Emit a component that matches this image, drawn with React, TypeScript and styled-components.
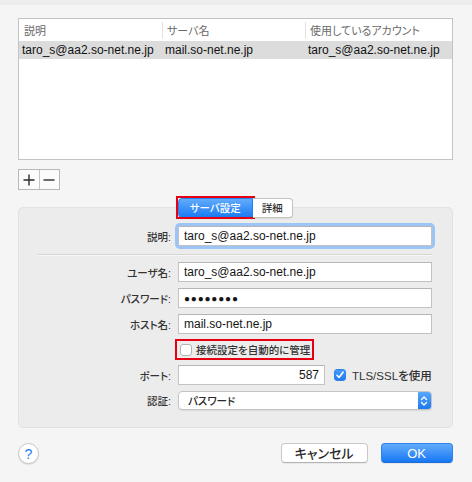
import styled, { createGlobalStyle } from "styled-components";

const GlobalStyle = createGlobalStyle`
  html, body {
    margin: 0;
    padding: 0;
  }
  body {
    background: #f5f5f5;
    font-family: "Liberation Sans", "Noto Sans CJK JP", sans-serif;
    color: #1e1e1e;
    font-feature-settings: "palt";
  }
  button, input {
    font-feature-settings: "palt";
  }
`;

const accounts = [
  {
    name: "taro_s@aa2.so-net.ne.jp",
    server: "mail.so-net.ne.jp",
    account: "taro_s@aa2.so-net.ne.jp",
  },
];

export default function App() {
  return (
    <>
      <GlobalStyle />
      <Window>
        <SideEdge>
          <SideMark $gap={25} $h={15} />
          <SideMark $gap={20} $h={25} />
        </SideEdge>
        <Main>
          <Table>
            <HeaderRow>
              <HeaderCell>説明</HeaderCell>
              <HeaderCell $divider>サーバ名</HeaderCell>
              <HeaderCell $divider>使用しているアカウント</HeaderCell>
            </HeaderRow>
            {accounts.map((a) => (
              <DataRow key={a.name}>
                <DataCell>{a.name}</DataCell>
                <DataCell>{a.server}</DataCell>
                <DataCell>{a.account}</DataCell>
              </DataRow>
            ))}
          </Table>

          <AddRemove>
            <SquareButton type="button" aria-label="追加">
              <svg width="12" height="12" viewBox="0 0 12 12">
                <path d="M6 0.5v11M0.5 6h11" stroke="#2b2b2b" strokeWidth="1.4" />
              </svg>
            </SquareButton>
            <SquareButton type="button" aria-label="削除">
              <svg width="12" height="12" viewBox="0 0 12 12">
                <path d="M0.5 6h11" stroke="#2b2b2b" strokeWidth="1.4" />
              </svg>
            </SquareButton>
          </AddRemove>

          <TabBox>
            <Tabs>
              <Tab type="button" $width={75} $active $marked>
                サーバ設定
              </Tab>
              <Tab type="button" $width={40}>
                詳細
              </Tab>
            </Tabs>
            <Panel>
              <Form>
                <Label>説明:</Label>
                <Input readOnly value="taro_s@aa2.so-net.ne.jp" $focused />
                <Separator />
                <Label>ユーザ名:</Label>
                <Input readOnly value="taro_s@aa2.so-net.ne.jp" />
                <Label>パスワード:</Label>
                <Input readOnly value="●●●●●●●●" $dots />
                <Label>ホスト名:</Label>
                <Input readOnly value="mail.so-net.ne.jp" />
                <CheckRow>
                  <CheckBox />
                  <CheckText>接続設定を自動的に管理</CheckText>
                </CheckRow>
                <Label>ポート:</Label>
                <PortLine>
                  <PortInput readOnly value="587" />
                  <CheckBox $checked>
                    <svg width="10" height="10" viewBox="0 0 10 10">
                      <path
                        d="M2 5.3l2 2.2L8 2.2"
                        fill="none"
                        stroke="#fff"
                        strokeWidth="1.6"
                        strokeLinecap="round"
                        strokeLinejoin="round"
                      />
                    </svg>
                  </CheckBox>
                  <CheckText $latin>TLS/SSLを使用</CheckText>
                </PortLine>
                <Label>認証:</Label>
                <Popup>
                  <PopupText>パスワード</PopupText>
                  <Stepper>
                    <svg width="8" height="12" viewBox="0 0 8 12">
                      <path
                        d="M1.5 4.5L4 2l2.5 2.5M1.5 7.5L4 10l2.5-2.5"
                        fill="none"
                        stroke="#fff"
                        strokeWidth="1.3"
                        strokeLinecap="round"
                        strokeLinejoin="round"
                      />
                    </svg>
                  </Stepper>
                </Popup>
              </Form>
            </Panel>
          </TabBox>

          <Footer>
            <HelpButton type="button">?</HelpButton>
            <Actions>
              <PushButton type="button" $width={87}>
                キャンセル
              </PushButton>
              <PushButton type="button" $width={72} $primary>
                OK
              </PushButton>
            </Actions>
          </Footer>
        </Main>
      </Window>
    </>
  );
}

const Window = styled.div`
  width: 472px;
  height: 482px;
  box-sizing: border-box;
  display: flex;
  border-top: 5px solid #ededed;
  background: #f5f5f5;
  overflow: hidden;
`;

const SideEdge = styled.div`
  width: 2px;
  display: flex;
  flex-direction: column;
`;

const SideMark = styled.span<{ $gap: number; $h: number }>`
  display: block;
  margin-top: ${(p) => p.$gap}px;
  height: ${(p) => p.$h}px;
  background: #b9d7f5;
`;

const Main = styled.div`
  flex: 1;
  display: flex;
  flex-direction: column;
  padding: 13px 20px 0 18px;
`;

const Table = styled.div`
  height: 142px;
  box-sizing: border-box;
  border: 1px solid #c4c4c4;
  background: #fff;
  display: flex;
  flex-direction: column;
`;

const HeaderRow = styled.div`
  display: grid;
  grid-template-columns: 143px 143px 1fr;
  align-items: center;
  height: 22px;
`;

const HeaderCell = styled.div<{ $divider?: boolean }>`
  height: 17px;
  display: flex;
  align-items: center;
  padding-left: ${(p) => (p.$divider ? 4 : 5)}px;
  border-left: ${(p) => (p.$divider ? "1px solid #e2e2e2" : "none")};
  font-size: 11px;
  color: #6a6a6a;
  white-space: nowrap;
`;

const DataRow = styled.div`
  display: grid;
  grid-template-columns: 143px 143px 1fr;
  align-items: center;
  height: 18px;
  background: #dcdcdc;
`;

const DataCell = styled.div`
  padding-left: 3px;
  font-size: 12px;
  color: #111;
  white-space: nowrap;
`;

const AddRemove = styled.div`
  margin-top: 9px;
  width: 42px;
  height: 21px;
  box-sizing: border-box;
  display: flex;
  border: 1px solid #b8b8b8;
  background: #fbfbfb;
`;

const SquareButton = styled.button`
  flex: 1;
  padding: 0;
  border: none;
  background: transparent;
  display: flex;
  align-items: center;
  justify-content: center;
  & + & {
    border-left: 1px solid #c4c4c4;
  }
`;

const TabBox = styled.div`
  margin-top: 8px;
  display: flex;
  flex-direction: column;
`;

const Tabs = styled.div`
  position: relative;
  z-index: 1;
  display: flex;
  justify-content: center;
  margin-bottom: -11px;
`;

const Tab = styled.button<{ $width: number; $active?: boolean; $marked?: boolean }>`
  position: relative;
  width: ${(p) => p.$width}px;
  height: 20px;
  box-sizing: border-box;
  padding: 0;
  font-family: "Liberation Sans", "Noto Sans CJK JP", sans-serif;
  font-size: 10.5px;
  font-weight: 500;
  line-height: 1;
  color: ${(p) => (p.$active ? "#fff" : "#333")};
  background: ${(p) =>
    p.$active ? "linear-gradient(#62abfc, #1b7bf3)" : "#fff"};
  border: 1px solid ${(p) => (p.$active ? "#2a82ee" : "#c3c3c3")};
  border-left-width: ${(p) => (p.$active ? 1 : 0)}px;
  border-radius: ${(p) => (p.$active ? "4px 0 0 4px" : "0 4px 4px 0")};
  box-shadow: 0 1px 1px rgba(0, 0, 0, 0.08);
  &::after {
    content: "";
    display: ${(p) => (p.$marked ? "block" : "none")};
    position: absolute;
    inset: -3px -3px -2px -3px;
    border: 2px solid #e60012;
  }
`;

const Panel = styled.div`
  background: #ececec;
  border: 1px solid #e2e2e2;
  border-radius: 5px;
  padding: 18px 20px 17px 0;
`;

const Form = styled.div`
  display: grid;
  grid-template-columns: 152px 1fr;
  column-gap: 7px;
  row-gap: 6px;
  align-items: center;
`;

const Label = styled.div`
  text-align: right;
  font-size: 10.5px;
  font-weight: 500;
  color: #333;
  white-space: nowrap;
`;

const Input = styled.input<{ $focused?: boolean; $dots?: boolean }>`
  height: 20px;
  box-sizing: border-box;
  width: 100%;
  padding: 0 5px;
  border: 1px solid #c2c2c2;
  border-top-color: #b5b5b5;
  background: #fff;
  font-family: "Liberation Sans", "Noto Sans CJK JP", sans-serif;
  font-size: ${(p) => (p.$dots ? "10px" : "12px")};
  letter-spacing: ${(p) => (p.$dots ? "0.8px" : "normal")};
  color: #151515;
  outline: none;
  border-radius: ${(p) => (p.$focused ? "2px" : "0")};
  box-shadow: ${(p) => (p.$focused ? "0 0 0 3px #9cc5f6" : "none")};
`;

const Separator = styled.div`
  grid-column: 1 / -1;
  margin: 2px 0 1px 19px;
  height: 1px;
  background: #d5d5d5;
  box-shadow: 0 1px 0 #f7f7f7;
`;

const CheckRow = styled.label`
  grid-column: 2;
  justify-self: start;
  height: 21px;
  box-sizing: border-box;
  margin: -1px 0 -1px -3px;
  padding: 0 2px 0 3px;
  display: inline-flex;
  align-items: center;
  gap: 4px;
  border: 2px solid #e60012;
`;

const CheckBox = styled.span<{ $checked?: boolean }>`
  width: 12px;
  height: 12px;
  box-sizing: border-box;
  flex: none;
  display: inline-flex;
  align-items: center;
  justify-content: center;
  border-radius: 3px;
  border: 1px solid ${(p) => (p.$checked ? "#2c7fea" : "#b3b3b3")};
  background: ${(p) => (p.$checked ? "linear-gradient(#4b9bfb, #1f7cf0)" : "#fff")};
`;

const CheckText = styled.span<{ $latin?: boolean }>`
  font-size: ${(p) => (p.$latin ? "11.5px" : "10.5px")};
  font-weight: 500;
  color: #333;
  white-space: nowrap;
`;

const PortLine = styled.div`
  display: flex;
  align-items: center;
  gap: 6px;
`;

const PortInput = styled(Input)`
  width: 147px;
  text-align: right;
  margin-right: 3px;
`;

const Popup = styled.div`
  height: 19px;
  box-sizing: border-box;
  display: flex;
  align-items: center;
  border: 1px solid #c4c4c4;
  border-radius: 4px;
  background: #fff;
  box-shadow: 0 1px 1px rgba(0, 0, 0, 0.08);
  overflow: hidden;
`;

const PopupText = styled.span`
  flex: 1;
  padding-left: 9px;
  font-size: 10.5px;
  font-weight: 500;
  color: #2a2a2a;
`;

const Stepper = styled.span`
  width: 13px;
  align-self: stretch;
  display: flex;
  align-items: center;
  justify-content: center;
  background: linear-gradient(#5aa7fb, #1b79f0);
`;

const Footer = styled.div`
  margin-top: 14px;
  display: flex;
  align-items: center;
  justify-content: space-between;
`;

const HelpButton = styled.button`
  width: 21px;
  height: 21px;
  margin-top: 1px;
  padding: 0;
  border-radius: 50%;
  border: 1px solid #c7c7c7;
  background: #fff;
  box-shadow: 0 1px 1px rgba(0, 0, 0, 0.1);
  color: #1d7af2;
  font-family: "Liberation Sans", sans-serif;
  font-size: 14px;
  line-height: 1;
`;

const Actions = styled.div`
  display: flex;
  gap: 13px;
`;

const PushButton = styled.button<{ $width: number; $primary?: boolean }>`
  width: ${(p) => p.$width}px;
  height: 20px;
  box-sizing: border-box;
  padding: 0;
  border-radius: 4px;
  font-family: "Liberation Sans", "Noto Sans CJK JP", sans-serif;
  font-size: 13px;
  font-weight: 500;
  line-height: 1;
  color: ${(p) => (p.$primary ? "#fff" : "#2a2a2a")};
  background: ${(p) => (p.$primary ? "linear-gradient(#63acfd, #1677f2)" : "#fff")};
  border: 1px solid ${(p) => (p.$primary ? "#2f83ec" : "#c9c9c9")};
  border-bottom-color: ${(p) => (p.$primary ? "#1a6cd8" : "#b3b3b3")};
  box-shadow: 0 1px 1px rgba(0, 0, 0, 0.06);
`;
